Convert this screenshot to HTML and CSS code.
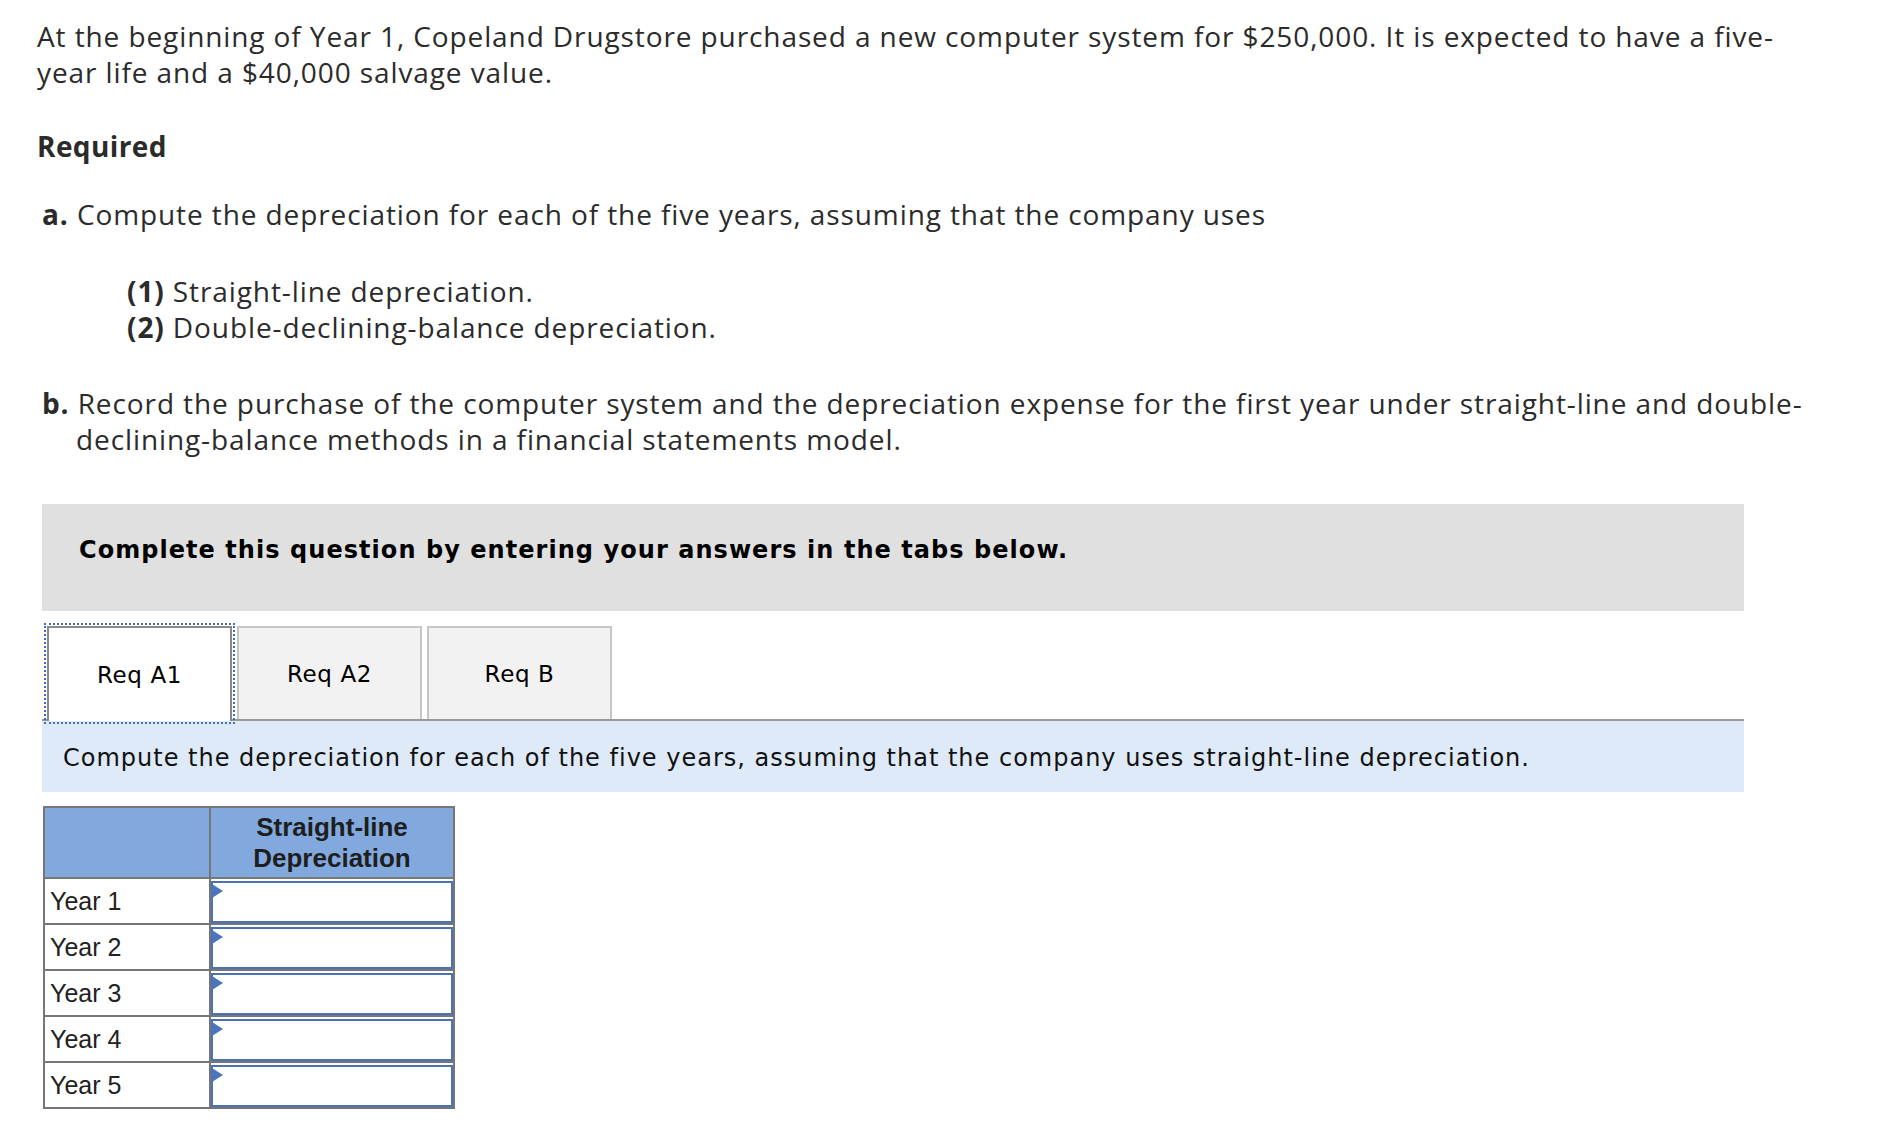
FILE: index.html
```html
<!DOCTYPE html>
<html lang="en">
<head>
<meta charset="utf-8">
<title>Copeland Drugstore depreciation</title>
<link rel="stylesheet" href="styles.css">
</head>
<body>
<div class="page">
  <p class="intro">At the beginning of Year 1, Copeland Drugstore purchased a new computer system for $250,000. It is expected to have a five-<br>year life and a $40,000 salvage value.</p>
  <h3 class="req">Required</h3>
  <p class="item"><b>a.</b> Compute the depreciation for each of the five years, assuming that the company uses</p>
  <div class="sub">
    <p><b>(1)</b> Straight-line depreciation.</p>
    <p><b>(2)</b> Double-declining-balance depreciation.</p>
  </div>
  <p class="item hang"><b>b.</b> Record the purchase of the computer system and the depreciation expense for the first year under straight-line and double-<br>declining-balance methods in a financial statements model.</p>

  <div class="panel">
    <div class="banner">Complete this question by entering your answers in the tabs below.</div>
    <div class="tabs">
      <div class="tab active">Req A1</div>
      <div class="tab">Req A2</div>
      <div class="tab">Req B</div>
    </div>
    <div class="instr">Compute the depreciation for each of the five years, assuming that the company uses straight-line depreciation.</div>
    <table class="grid">
      <colgroup><col class="c1"><col class="c2"></colgroup>
      <thead>
        <tr><th></th><th>Straight-line<br>Depreciation</th></tr>
      </thead>
      <tbody>
        <tr><td class="lbl">Year 1</td><td class="cell"><div class="inp"><svg class="flag" width="11" height="14" viewBox="0 0 11 14"><path d="M0 0 L11 7 L0 14 Z" fill="#4a76bd"/></svg></div></td></tr>
        <tr><td class="lbl">Year 2</td><td class="cell"><div class="inp"><svg class="flag" width="11" height="14" viewBox="0 0 11 14"><path d="M0 0 L11 7 L0 14 Z" fill="#4a76bd"/></svg></div></td></tr>
        <tr><td class="lbl">Year 3</td><td class="cell"><div class="inp"><svg class="flag" width="11" height="14" viewBox="0 0 11 14"><path d="M0 0 L11 7 L0 14 Z" fill="#4a76bd"/></svg></div></td></tr>
        <tr><td class="lbl">Year 4</td><td class="cell"><div class="inp"><svg class="flag" width="11" height="14" viewBox="0 0 11 14"><path d="M0 0 L11 7 L0 14 Z" fill="#4a76bd"/></svg></div></td></tr>
        <tr><td class="lbl">Year 5</td><td class="cell"><div class="inp"><svg class="flag" width="11" height="14" viewBox="0 0 11 14"><path d="M0 0 L11 7 L0 14 Z" fill="#4a76bd"/></svg></div></td></tr>
      </tbody>
    </table>
  </div>
</div>
</body>
</html>
```

FILE: styles.css
```css
html, body {
  margin: 0;
  padding: 0;
  background: #fff;
}

.page {
  padding: 18px 0 0 37px;
  font-family: "Open Sans", "Liberation Sans", sans-serif;
  font-size: 28px;
  line-height: 36px;
  letter-spacing: 0.9px;
  color: #2b2b2b;
}

.page p {
  margin: 0;
}

.req {
  margin: 38px 0 0 0;
  font-size: 28px;
  font-weight: 700;
  line-height: 36px;
  letter-spacing: 0.4px;
}

.item {
  margin-top: 32px !important;
  margin-left: 5px !important;
}

.item b, .sub b {
  font-weight: 700;
}

.sub {
  margin: 41px 0 0 90px;
}

.hang {
  margin-top: 40px !important;
  padding-left: 34px;
  text-indent: -34px;
}

.panel {
  margin: 47px 0 0 5px;
  width: 1702px;
  letter-spacing: normal;
}

.banner {
  background: #e0e0e0;
  padding: 32px 0 47px 37px;
  font-family: "DejaVu Sans", Verdana, sans-serif;
  font-weight: 700;
  font-size: 24px;
  line-height: 28px;
  letter-spacing: 1.05px;
  color: #000;
}

.tabs {
  display: flex;
  gap: 5px;
  margin-top: 15px;
  padding-left: 5px;
  border-bottom: 2px solid #999;
}

.tab {
  width: 181px;
  height: 91px;
  display: flex;
  align-items: center;
  justify-content: center;
  background: #f2f2f2;
  border: 2px solid #c6c6c6;
  border-bottom: 0;
  font-family: "DejaVu Sans", Verdana, sans-serif;
  font-size: 23px;
  letter-spacing: 0.6px;
  color: #000;
}

.tab.active {
  background: #fff;
  border-color: #8a8a8a;
  height: 93px;
  margin-bottom: -2px;
  outline: 2px dotted #3f6fc0;
  outline-offset: 1px;
}

.instr {
  background: #deeaf8;
  padding: 24px 0 21px 21px;
  font-family: "DejaVu Sans", Verdana, sans-serif;
  font-size: 24px;
  line-height: 26px;
  letter-spacing: 1px;
  color: #111;
}

.grid {
  margin: 14px 0 0 1px;
  border-collapse: collapse;
  table-layout: fixed;
  width: 410px;
  font-family: "Liberation Sans", Arial, sans-serif;
  font-size: 25px;
  color: #222;
}

.grid .c1 { width: 166px; }
.grid .c2 { width: 244px; }

.grid th, .grid td {
  border: 2px solid #767676;
  padding: 0;
}

.grid th {
  background: #82a9de;
  height: 69px;
  font-size: 26px;
  font-weight: 700;
  line-height: 31px;
  text-align: center;
  color: #1e1e1e;
}

.grid td {
  height: 43px;
}

.grid td.lbl {
  padding-left: 5px;
  vertical-align: middle;
}

.grid td.cell {
  padding: 1px 0 0 0;
}

.inp {
  position: relative;
  height: 38px;
  border: 2px solid #4a72b5;
  background: #fff;
}

.flag {
  position: absolute;
  left: -1px;
  top: 1px;
  display: block;
}
```
